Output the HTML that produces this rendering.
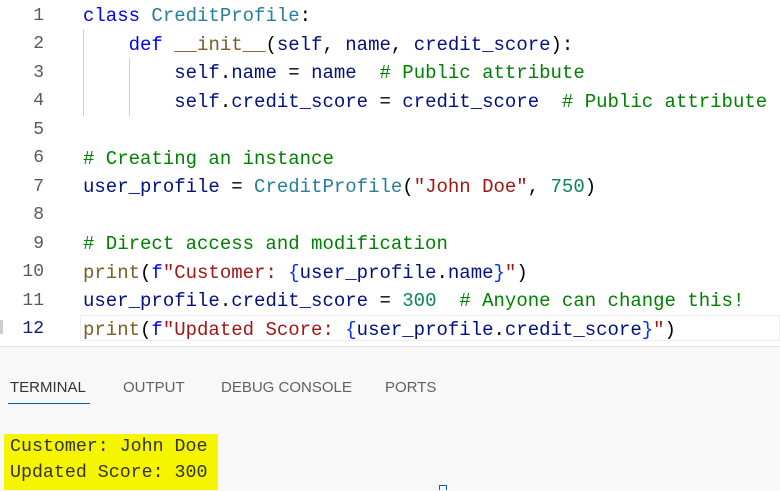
<!DOCTYPE html>
<html><head><style>
body{margin:0;width:780px;height:490px;overflow:hidden;background:#fff;font-family:"Liberation Mono",monospace;}
.ed{position:absolute;left:0;top:0;width:780px;height:346px;background:#fff;}
.ln{position:absolute;left:0;width:44px;text-align:right;color:#5a5a5a;font-size:18px;}
.code{position:absolute;left:83px;font-size:19px;white-space:pre;color:#000;}
.k{color:#0000ff}.c{color:#267f99}.v{color:#001080}.cm{color:#008000}.s{color:#a31515}.n{color:#098658}.f{color:#795e26}.b{color:#0431fa}
.panel{position:absolute;left:0;top:346px;width:780px;height:144px;background:#f8f8f8;border-top:1px solid #e5e5e5;}
.tab{position:absolute;top:32px;font-family:"Liberation Sans",sans-serif;font-size:15px;color:#616161;}
.term{position:absolute;left:4px;top:434px;width:214px;height:56px;background:#f5f500;}
.tl{position:absolute;left:10px;font-size:18.3px;color:#333;white-space:pre;}
</style></head><body>
<div class="ed">
<div style="position:absolute;left:83px;top:30px;width:1px;height:86px;background:#d0d0d0"></div>
<div style="position:absolute;left:129px;top:58px;width:1px;height:58px;background:#d0d0d0"></div>
<div style="position:absolute;left:80px;top:315px;width:700px;height:26px;border:1px solid #eee;box-sizing:border-box"></div>
<div style="position:absolute;left:0;top:320px;width:3px;height:14px;background:#ccc"></div>
<div class="ln" style="top:6px">1</div><div class="code" style="top:5px"><span class="k">class</span> <span class="c">CreditProfile</span>:</div>
<div class="ln" style="top:34px">2</div><div class="code" style="top:34px">    <span class="k">def</span> <span class="f">__init__</span>(<span class="v">self</span>, <span class="v">name</span>, <span class="v">credit_score</span>):</div>
<div class="ln" style="top:63px">3</div><div class="code" style="top:62px">        <span class="v">self</span>.<span class="v">name</span> = <span class="v">name</span>  <span class="cm"># Public attribute</span></div>
<div class="ln" style="top:91px">4</div><div class="code" style="top:91px">        <span class="v">self</span>.<span class="v">credit_score</span> = <span class="v">credit_score</span>  <span class="cm"># Public attribute</span></div>
<div class="ln" style="top:120px">5</div>
<div class="ln" style="top:148px">6</div><div class="code" style="top:148px"><span class="cm"># Creating an instance</span></div>
<div class="ln" style="top:177px">7</div><div class="code" style="top:176px"><span class="v">user_profile</span> = <span class="c">CreditProfile</span>(<span class="s">"John Doe"</span>, <span class="n">750</span>)</div>
<div class="ln" style="top:205px">8</div>
<div class="ln" style="top:234px">9</div><div class="code" style="top:233px"><span class="cm"># Direct access and modification</span></div>
<div class="ln" style="top:262px">10</div><div class="code" style="top:262px"><span class="f">print</span>(<span class="k">f</span><span class="s">"Customer: </span><span class="b">{</span><span class="v">user_profile</span>.<span class="v">name</span><span class="b">}</span><span class="s">"</span>)</div>
<div class="ln" style="top:291px">11</div><div class="code" style="top:290px"><span class="v">user_profile</span>.<span class="v">credit_score</span> = <span class="n">300</span>  <span class="cm"># Anyone can change this!</span></div>
<div class="ln" style="top:319px;color:#0b216f">12</div><div class="code" style="top:319px"><span class="f">print</span>(<span class="k">f</span><span class="s">"Updated Score: </span><span class="b">{</span><span class="v">user_profile</span>.<span class="v">credit_score</span><span class="b">}</span><span class="s">"</span>)</div>
</div>
<div class="panel">
<div class="tab" style="left:10px;color:#333">TERMINAL</div>
<div style="position:absolute;left:8px;top:56px;width:82px;height:1px;background:#005fb8"></div>
<div class="tab" style="left:123px">OUTPUT</div>
<div class="tab" style="left:221px">DEBUG CONSOLE</div>
<div class="tab" style="left:385px">PORTS</div>
</div>
<div class="term"></div>
<div class="tl" style="top:437px">Customer: John Doe</div>
<div class="tl" style="top:463px">Updated Score: 300</div>
<div style="position:absolute;left:439px;top:485px;width:8px;height:5px;border:1px solid #005fb8;border-bottom:none;box-sizing:border-box"></div>
</body></html>
